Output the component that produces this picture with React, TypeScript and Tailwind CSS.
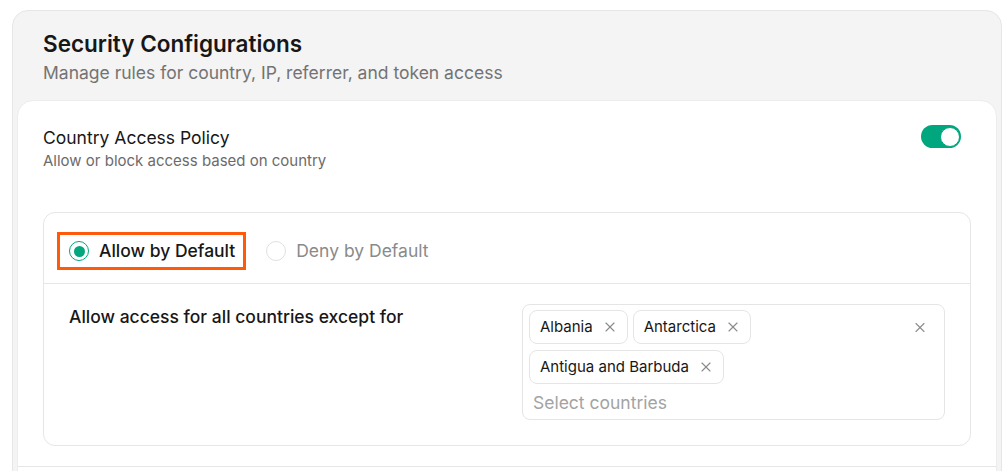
import React from "react";

function XIcon({ size = 14, className = "" }: { size?: number; className?: string }) {
  return (
    <svg width={size} height={size} viewBox="0 0 24 24" fill="none" stroke="currentColor" strokeWidth={1.7} strokeLinecap="round" strokeLinejoin="round" className={className}>
      <path d="M18 6 6 18" />
      <path d="m6 6 12 12" />
    </svg>
  );
}

function Chip({ label }: { label: string }) {
  return (
    <div className="flex h-[34px] items-center gap-[9px] rounded-lg border border-[#e5e5e5] bg-white pl-[10px] pr-[9px] text-[15px] text-[#171717]">
      <span>{label}</span>
      <XIcon size={16} className="text-[#8a8a8a]" />
    </div>
  );
}

export default function App() {
  return (
    <div className="h-[471px] w-full overflow-hidden bg-white pl-3 pr-[5px] pt-[10px]" style={{ fontFamily: "Inter, 'Noto Sans', sans-serif" }}>
      <div className="rounded-2xl border border-[#e6e6e6] bg-[#f4f4f4] px-[4px]">
        <div className="pb-[15px] pl-[26px] pt-[19px]">
          <h1 className="text-[22.5px] font-semibold leading-[28px] text-[#171717]">Security Configurations</h1>
          <p className="mt-[3px] text-[17.5px] leading-[24px] text-[#737373]">Manage rules for country, IP, referrer, and token access</p>
        </div>
        <div className="rounded-2xl border border-[#ececec] bg-white">
          <div className="flex items-start justify-between pl-[25px] pr-[35px] pt-[25px]">
            <div>
              <div className="text-[17.5px] leading-[24px] text-[#171717]">Country Access Policy</div>
              <div className="mt-[1px] text-[15px] leading-[20px] text-[#6b6b6b]">Allow or block access based on country</div>
            </div>
            <div className="mt-[-1px] flex h-[23px] w-[40px] items-center justify-end rounded-full bg-[#00a67e] px-[1.5px]">
              <div className="h-[20px] w-[20px] rounded-full border-[1.5px] border-[#00a67e] bg-white" />
            </div>
          </div>
          <div className="mx-[25px] mt-[41px] rounded-xl border border-[#e6e6e6]">
            <div className="flex items-center gap-[20px] border-b border-[#e6e6e6] pb-[13px] pl-[13px] pt-[19px]">
              <div className="flex h-[38px] items-center gap-[10px] border-[3px] border-[#ff5a0a] pl-[9px] pr-[8px]">
                <div className="flex h-[20px] w-[20px] items-center justify-center rounded-full border border-[#00a67e]">
                  <div className="h-[11px] w-[11px] rounded-full bg-[#00a67e]" />
                </div>
                <span className="text-[17.5px] leading-[24px] text-[#171717]" style={{ fontWeight: 450 }}>Allow by Default</span>
              </div>
              <div className="flex items-center gap-[10px]">
                <div className="h-[20px] w-[20px] rounded-full border border-[#e0e0e0]" />
                <span className="text-[17.5px] leading-[24px] text-[#8a8a8a]">Deny by Default</span>
              </div>
            </div>
            <div className="grid grid-cols-2 gap-[30px] px-[25px] pb-[25px] pt-[20px]">
              <div className="mt-[1px] text-[17.5px] leading-[24px] text-[#171717]" style={{ fontWeight: 450 }}>Allow access for all countries except for</div>
              <div className="flex items-start rounded-lg border border-[#e5e5e5] pb-[4px] pl-[6px] pr-[16px] pt-[5px]">
                <div className="flex-1">
                  <div className="flex flex-wrap gap-x-[5px] gap-y-[6px]">
                    <Chip label="Albania" />
                    <Chip label="Antarctica" />
                    <Chip label="Antigua and Barbuda" />
                  </div>
                  <div className="mt-[7px] pl-[4px] text-[17.5px] leading-[24px] text-[#a3a3a3]">Select countries</div>
                </div>
                <div className="mt-[9px] flex h-[16px] w-[16px] items-center justify-center text-[#8a8a8a]">
                  <XIcon size={17} />
                </div>
              </div>
            </div>
          </div>
          <div className="mt-[20px] border-t border-[#e6e6e6] pt-[40px]" />
        </div>
      </div>
    </div>
  );
}
